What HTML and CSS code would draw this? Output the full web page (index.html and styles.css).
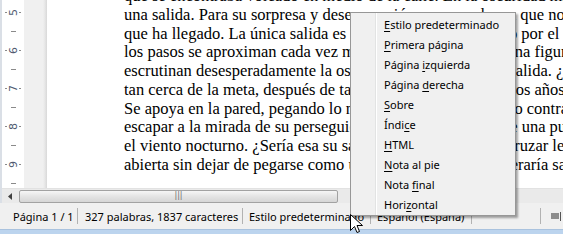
FILE: index.html
```html
<!DOCTYPE html>
<html lang="es">
<head>
<meta charset="utf-8">
<title>Documento</title>
<link rel="stylesheet" href="styles.css">
</head>
<body>
<div class="win">
  <div class="upper">
    <div class="frame-left"></div>
    <div class="work">
      <div class="main">
        <div class="vruler">
          <div class="slot num"><i></i><span>5</span><i></i></div>
          <div class="slot dash"><b></b></div>
          <div class="slot num"><i></i><span>6</span><i></i></div>
          <div class="slot dash"><b></b></div>
          <div class="slot num"><i></i><span>7</span><i></i></div>
          <div class="slot dash"><b></b></div>
          <div class="slot num"><i></i><span>8</span><i></i></div>
          <div class="slot dash"><b></b></div>
          <div class="slot num"><i></i><span>9</span><i></i></div>
          <div class="slot dash"><b></b></div>
        </div>
        <div class="gutter"></div>
        <div class="page">
          <div class="text">
            <div class="ln">que se encontraba volcado en medio de la calle. En la oscuridad mira buscando</div>
            <div class="ln">una salida. Para su sorpresa y desesperación, comprueba ya que no hay</div>
            <div class="ln">que ha llegado. La única salida es el largo camino recorrido por el</div>
            <div class="ln">los pasos se aproximan cada vez más y más, y ya aparece una figura</div>
            <div class="ln">escrutinan desesperadamente la oscuridad, buscando cada salida. ¿Va</div>
            <div class="ln">tan cerca de la meta, después de tantos sacrificios, y de tantos años de</div>
            <div class="ln">Se apoya en la pared, pegando lo más posible todo el cuerpo contra</div>
            <div class="ln">escapar a la mirada de su perseguidor. De repente, descubre una puerta</div>
            <div class="ln">el viento nocturno. ¿Sería esa su salida? Decidió que va a cruzar lentamente</div>
            <div class="ln">abierta sin dejar de pegarse como una sombra. ¿Dónde esperaría salir</div>
          </div>
        </div>
        <div class="vscroll">
          <div class="vbtn">&#8673;</div>
          <div class="vbtn dot"><span></span></div>
          <div class="vbtn">&#8675;</div>
        </div>
      </div>
      <div class="hscroll">
        <div class="harrow">
          <svg width="4" height="7" viewBox="0 0 4 7"><path d="M4 0 L0 3.5 L4 7 Z" fill="#404040"/></svg>
        </div>
        <div class="track">
          <div class="thumb"><span class="grip">|||</span></div>
        </div>
        <div class="harrow">
          <svg width="4" height="7" viewBox="0 0 4 7"><path d="M0 0 L4 3.5 L0 7 Z" fill="#404040"/></svg>
        </div>
        <div class="corner"></div>
      </div>
    </div>
  </div>
  <div class="status">
    <div class="cell c1">Página 1 / 1</div><div class="sep"></div>
    <div class="cell c2">327 palabras, 1837 caracteres</div><div class="sep"></div>
    <div class="cell c3">Estilo predeterminado</div><div class="sep"></div>
    <div class="cell c4">Español (España)</div><div class="sep"></div>
    <div class="cell c5"></div><div class="sep"></div>
    <div class="cell c6"><span class="layout-ico"></span><span class="ico-line"></span></div>
  </div>
  <div class="bottom"></div>

  <div class="menu">
    <div class="item"><u>E</u>stilo predeterminado</div>
    <div class="item"><u>P</u>rimera página</div>
    <div class="item">Página <u>i</u>zquierda</div>
    <div class="item">Página <u>d</u>erecha</div>
    <div class="item"><u>S</u>obre</div>
    <div class="item">Índi<u>c</u>e</div>
    <div class="item"><u>H</u>TML</div>
    <div class="item"><u>N</u>ota al pie</div>
    <div class="item">Nota <u>f</u>inal</div>
    <div class="item">Hori<u>z</u>ontal</div>
  </div>

  <svg class="cursor" width="13" height="21" viewBox="0 0 13 21">
    <path d="M0.5 0.5 L0.5 16.5 L4.5 12.5 L7 18.5 L9.5 17.5 L7 11.5 L12.5 11.5 Z" fill="#fff" stroke="#000" stroke-width="1" stroke-linejoin="miter"/>
  </svg>
</div>
</body>
</html>
```

FILE: styles.css
```css
* { box-sizing: border-box; }
html, body { margin: 0; padding: 0; }
body { width: 563px; height: 234px; overflow: hidden; background: #f0f0f0; }

.win {
  position: relative;
  width: 563px;
  height: 234px;
  display: flex;
  flex-direction: column;
  font-family: "Noto Sans", "Open Sans", sans-serif;
  font-size: 11px;
  color: #000;
}

.upper { display: flex; height: 203px; }
.frame-left {
  width: 7px;
  background: #b9d1ea;
  border-left: 2px solid #dadfe6;
}
.work { flex: 1; display: flex; flex-direction: column; }
.main { display: flex; height: 188px; }

.vruler {
  width: 22px;
  background: #fff;
  padding-top: 3px;
  display: flex;
  flex-direction: column;
  overflow: hidden;
}
.slot { height: 19px; flex: none; display: flex; align-items: center; justify-content: center; }
.slot.num { gap: 1px; }
.slot.num i { display: block; width: 2px; height: 1px; background: #8a8a8a; }
.slot.num span {
  display: block;
  transform: rotate(-90deg);
  font-family: "DejaVu Sans", sans-serif;
  font-size: 11px;
  line-height: 11px;
  color: #505a70;
  width: 10px;
  text-align: center;
}
.slot.dash b { display: block; width: 5px; height: 1px; background: #8a8a8a; }

.gutter {
  width: 23px;
  background: linear-gradient(to right, #f0f0f0 0, #f0f0f0 19px, #e6e6e6 21px, #d8d8d8 23px);
}

.page {
  flex: 1;
  background: #fff;
  overflow: hidden;
  padding-left: 77px;
}
.text {
  margin-top: -13px;
  font-family: "Liberation Serif", serif;
  font-size: 16.5px;
  line-height: 18.75px;
  color: #000;
}
.ln { white-space: nowrap; }

.vscroll {
  width: 8px;
  background: #f7f7f7;
  border-left: 1px solid #dcdcdc;
  display: flex;
  flex-direction: column;
  padding-top: 140px;
  gap: 1px;
}
.vbtn {
  height: 11px;
  width: 9px;
  border: 1px solid #8c8c8c;
  border-right: none;
  border-radius: 2px 0 0 2px;
  background: #fff;
  font-size: 8px;
  line-height: 9px;
  color: #333;
  overflow: hidden;
  font-family: "DejaVu Sans", sans-serif;
}
.vbtn.dot { display: flex; align-items: center; padding-left: 1px; }
.vbtn.dot span { display: block; width: 6px; height: 6px; border-radius: 50%; background: #3b78c8; }

.hscroll {
  height: 15px;
  display: flex;
  background: #eaeaea;
  border-top: 1px solid #e2e2e2;
}
.harrow { width: 16px; display: flex; align-items: center; justify-content: center; }
.track { flex: 1; display: flex; align-items: center; padding-left: 1px; }
.thumb {
  width: 319px;
  height: 13px;
  border: 1px solid #a2a2a2;
  border-radius: 2px;
  background: linear-gradient(to bottom, #f6f6f6, #e4e4e4 50%, #d6d6d6);
  display: flex;
  align-items: center;
  justify-content: center;
}
.grip { font-size: 8px; line-height: 8px; color: #707070; font-family: "DejaVu Sans", sans-serif; }
.corner { width: 8px; background: #f0f0f0; }

.status {
  height: 26px;
  display: flex;
  align-items: center;
  background: #f0f0f0;
  white-space: nowrap;
}
.cell { overflow: hidden; }
.c1 { width: 77px; padding-left: 13px; }
.c2 { width: 164px; padding-left: 7px; }
.c3 { width: 127px; padding-left: 6px; }
.c4 { width: 100px; padding-left: 6px; }
.c5 { width: 68px; }
.c6 { flex: 1; display: flex; align-items: center; padding-left: 10px; gap: 1px; }
.sep { width: 1px; height: 16px; background: #b2b2b2; flex: none; }
.layout-ico { display: block; width: 8px; height: 6px; background: #8d8d8d; }
.ico-line { display: block; width: 1px; height: 9px; background: #555; }

.bottom {
  height: 5px;
  background: #bcd4ee;
  border-top: 1px solid #a9c2de;
}

.menu {
  position: absolute;
  left: 350px;
  top: 12px;
  width: 166px;
  padding-top: 2px;
  background: #f0f0f0;
  border: 1px solid #979797;
  box-shadow: 2px 2px 2px rgba(0, 0, 0, 0.35);
  background-image: linear-gradient(to right, transparent 24px, #e2e3e3 24px, #e2e3e3 25px, #ffffff 25px, #ffffff 26px, transparent 26px);
}
.item {
  height: 20px;
  line-height: 19px;
  padding-left: 33px;
  white-space: nowrap;
  color: #000;
  font-size: 11px;
}
.item u { text-decoration-thickness: 1px; text-underline-offset: 2px; }

.cursor { position: absolute; left: 350px; top: 214px; }
```
